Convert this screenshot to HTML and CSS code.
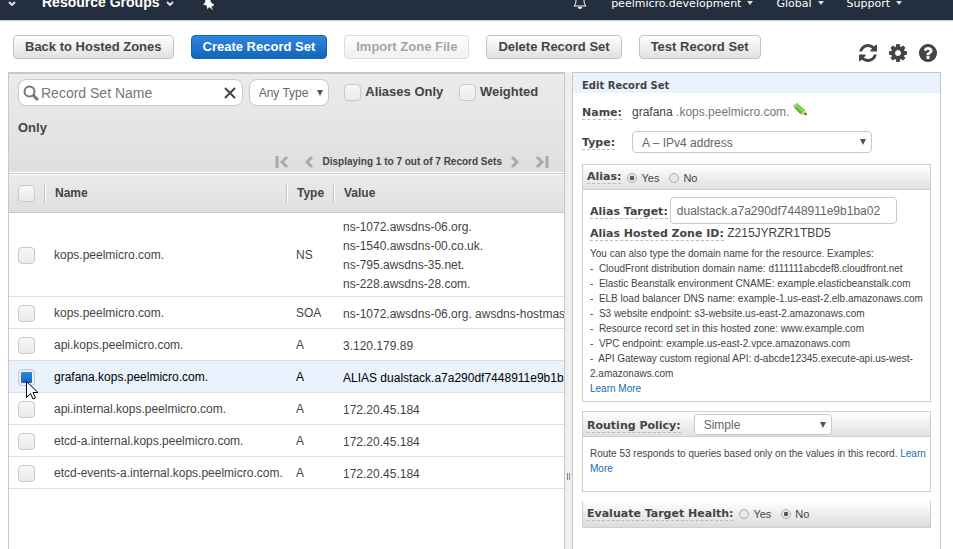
FILE: index.html
```html
<!DOCTYPE html>
<html lang="en">
<head>
<meta charset="utf-8">
<title>Route 53 Record Sets</title>
<link rel="stylesheet" href="styles.css">
</head>
<body>
<header class="topnav">
  <nav class="topnav-bar">
    <svg class="chev chev-first" viewBox="0 0 8 5"><path d="M1 1l3 3 3-3"/></svg>
    <a class="groups" href="#">Resource Groups</a>
    <svg class="chev" viewBox="0 0 8 5"><path d="M1 1l3 3 3-3"/></svg>
    <svg class="pin" viewBox="0 0 12 14"><path d="M3 0L8 1 7.500 6 11 8.500 10 10.500 8 10 10 14 6 11 4.500 13.500 3.500 9.500 0 8.500 2 6.500z"/></svg>
    <svg class="bell" viewBox="0 0 16 18"><path d="M2 14c2-2 2-4 2-7 0-3 2-5 4-5s4 2 4 5c0 3 0 5 2 7z"/><path class="clapper" d="M6 15h4a2 2 0 0 1-4 0z"/></svg>
    <a class="menu account" href="#">peelmicro.development <span class="caret"></span></a>
    <a class="menu region" href="#">Global <span class="caret"></span></a>
    <a class="menu support" href="#">Support <span class="caret"></span></a>
  </nav>
</header>

<div class="toolbar">
  <button class="btn" type="button">Back to Hosted Zones</button>
  <button class="btn primary" type="button">Create Record Set</button>
  <button class="btn" type="button" disabled>Import Zone File</button>
  <button class="btn" type="button">Delete Record Set</button>
  <button class="btn" type="button">Test Record Set</button>
  <div class="tools">
    <button class="tool" type="button" aria-label="Refresh"><svg viewBox="0 0 1536 1536"><path d="M1511 928q0 5-1 7-64 268-268 434.5t-478 166.5q-146 0-282.5-55t-243.5-157l-129 129q-19 19-45 19t-45-19-19-45v-448q0-26 19-45t45-19h448q26 0 45 19t19 45-19 45l-137 137q71 66 161 102t187 36q134 0 250-65t186-179q11-17 53-117 8-23 30-23h192q13 0 22.5 9.5t9.5 22.5zm25-800v448q0 26-19 45t-45 19h-448q-26 0-45-19t-19-45 19-45l138-138q-148-137-349-137-134 0-250 65t-186 179q-11 17-53 117-8 23-30 23h-199q-13 0-22.5-9.5t-9.5-22.5v-7q65-268 270-434.5t480-166.5q146 0 284 55.5t245 156.5l130-129q19-19 45-19t45 19 19 45z"/></svg></button>
    <button class="tool" type="button" aria-label="Settings"><svg viewBox="128 128 1536 1536"><path d="M1152 896q0-106-75-181t-181-75-181 75-75 181 75 181 181 75 181-75 75-181zm512-109v222q0 12-8 23t-20 13l-185 28q-19 54-39 91 35 50 107 138 10 12 10 25t-9 23q-27 37-99 108t-94 71q-12 0-26-9l-138-108q-44 23-91 38-16 136-29 186-7 28-36 28h-222q-14 0-24.5-8.5t-11.5-21.5l-28-184q-49-16-90-37l-141 107q-10 9-25 9-14 0-25-11-126-114-165-168-7-10-7-23 0-12 8-23 15-21 51-66.5t54-70.5q-27-50-41-99l-183-27q-13-2-21-12.5t-8-23.5v-222q0-12 8-23t19-13l186-28q14-46 39-92-40-57-107-138-10-12-10-24 0-10 9-23 26-36 98.5-107.5t94.5-71.5q13 0 26 10l138 107q44-23 91-38 16-136 29-186 7-28 36-28h222q14 0 24.5 8.5t11.5 21.5l28 184q49 16 90 37l142-107q9-9 24-9 13 0 25 10 129 119 165 170 7 8 7 22 0 12-8 23-15 21-51 66.5t-54 70.5q26 50 41 98l183 28q13 2 21 12.5t8 23.5z"/></svg></button>
    <button class="tool" type="button" aria-label="Help"><svg viewBox="128 128 1536 1536"><path d="M1024 1376v-192q0-14-9-23t-23-9h-192q-14 0-23 9t-9 23v192q0 14 9 23t23 9h192q14 0 23-9t9-23zm256-672q0-88-55.5-163t-138.5-116-170-41q-243 0-371 213-15 24 8 42l132 100q7 6 19 6 16 0 25-12 53-68 86-92 34-24 86-24 48 0 85.5 26t37.5 59q0 38-20 61t-68 45q-63 28-115.5 86.5t-52.5 125.5v36q0 14 9 23t23 9h192q14 0 23-9t9-23q0-19 21.5-49.5t54.5-49.5q32-18 49-28.5t46-35 44.5-48 28-60.5 12.5-81zm384 192q0 209-103 385.5t-279.5 279.5-385.5 103-385.5-103-279.5-279.5-103-385.5 103-385.5 279.5-279.5 385.5-103 385.5 103 279.5 279.5 103 385.5z"/></svg></button>
  </div>
</div>

<main class="split">
  <section class="list">
    <div class="filters">
      <div class="filter-line">
        <span class="search">
          <svg class="lens" viewBox="0 0 16 16"><circle cx="6.5" cy="6.5" r="5"/><path d="M10 10l5 5"/></svg>
          <input type="text" aria-label="Record Set Name" placeholder="Record Set Name">
          <button class="clear" type="button" aria-label="Clear"><svg viewBox="0 0 12 12"><path d="M1 1l10 10M11 1L1 11"/></svg></button>
        </span>
        <span class="select any-type"><select aria-label="Record type"><option>Any Type</option></select><svg class="arrow" viewBox="0 0 6 6"><path d="M0 0h6L3 6z"/></svg></span>
        <input class="check" type="checkbox" id="aliases"><label for="aliases">Aliases Only</label>
        <input class="check weighted" type="checkbox" id="weighted"><label for="weighted">Weighted Only</label>
      </div>
      <div class="pager">
        <button type="button" aria-label="First page"><svg class="wide" viewBox="0 0 14 14"><path d="M2 1v12M12 2L7 7l5 5"/></svg></button>
        <button type="button" aria-label="Previous page"><svg viewBox="0 0 10 14"><path d="M8 2L3 7l5 5"/></svg></button>
        <span>Displaying 1 to 7 out of 7 Record Sets</span>
        <button type="button" aria-label="Next page"><svg viewBox="0 0 10 14"><path d="M2 2l5 5-5 5"/></svg></button>
        <button type="button" aria-label="Last page"><svg class="wide" viewBox="0 0 14 14"><path d="M2 2l5 5-5 5M12 1v12"/></svg></button>
      </div>
    </div>
    <table class="records">
      <colgroup><col class="c-check"><col class="c-name"><col class="c-type"><col></colgroup>
      <thead>
        <tr><th><input class="check" type="checkbox" aria-label="Select all"></th><th><span>Name</span></th><th><span>Type</span></th><th><span>Value</span></th></tr>
      </thead>
      <tbody>
        <tr><td><input class="check" type="checkbox" aria-label="Select NS record"></td><td>kops.peelmicro.com.</td><td>NS</td><td>ns-1072.awsdns-06.org.<br>ns-1540.awsdns-00.co.uk.<br>ns-795.awsdns-35.net.<br>ns-228.awsdns-28.com.</td></tr>
        <tr><td><input class="check" type="checkbox" aria-label="Select SOA record"></td><td>kops.peelmicro.com.</td><td>SOA</td><td>ns-1072.awsdns-06.org. awsdns-hostmaster.</td></tr>
        <tr><td><input class="check" type="checkbox" aria-label="Select api"></td><td>api.kops.peelmicro.com.</td><td>A</td><td>3.120.179.89</td></tr>
        <tr class="selected"><td><input class="check" type="checkbox" aria-label="Select grafana" checked><svg class="pointer" viewBox="0 0 12 19"><path d="M.5.5v16l4-4 2.500 5.500 2.500-1-2.500-5.500h5z"/></svg></td><td>grafana.kops.peelmicro.com.</td><td>A</td><td>ALIAS dualstack.a7a290df7448911e9b1ba02</td></tr>
        <tr><td><input class="check" type="checkbox" aria-label="Select api.internal"></td><td>api.internal.kops.peelmicro.com.</td><td>A</td><td>172.20.45.184</td></tr>
        <tr><td><input class="check" type="checkbox" aria-label="Select etcd-a"></td><td>etcd-a.internal.kops.peelmicro.com.</td><td>A</td><td>172.20.45.184</td></tr>
        <tr><td><input class="check" type="checkbox" aria-label="Select etcd-events-a"></td><td>etcd-events-a.internal.kops.peelmicro.com.</td><td>A</td><td>172.20.45.184</td></tr>
      </tbody>
    </table>
  </section>

  <div class="gutter"><span class="grip"></span></div>

  <form class="editor">
    <h2>Edit Record Set</h2>
    <div class="field name-field">
      <span class="cap"><b class="hint">Name:</b></span>
      <span class="record-name">grafana <span>.kops.peelmicro.com.</span></span>
      <svg class="pencil" viewBox="0 0 14 13"><path d="M0 3L4 0l8 7-4 4.500z" fill="#5fd13a"/><path d="M3 2l7 6" stroke="#a5ea85"/><path d="M2 4.500l5.500 6" stroke="#318c1c"/><path d="M0 3L4 0l1.500 1.500L2 4.500z" fill="#d9b0a8"/><path d="M12 7l2 5-6-.5z" fill="#e9bd86"/><path d="M13 9.500l1 2.500-3-.3z" fill="#444"/></svg>
    </div>
    <div class="field type-field">
      <label class="cap" for="rtype"><b class="hint">Type:</b></label>
      <span class="select type-select"><select id="rtype"><option>A – IPv4 address</option></select><svg class="arrow" viewBox="0 0 6 6"><path d="M0 0h6L3 6z"/></svg></span>
    </div>

    <section class="box alias">
      <div class="box-head">
        <b class="hint">Alias:</b>
        <span class="radios">
          <input type="radio" name="alias" id="alias-yes" checked><label for="alias-yes">Yes</label>
          <input type="radio" name="alias" id="alias-no"><label for="alias-no">No</label>
        </span>
      </div>
      <div class="box-body">
        <div class="target"><label for="target"><b class="hint">Alias Target:</b></label><input id="target" type="text" value="dualstack.a7a290df7448911e9b1ba02"></div>
        <div class="zone"><b class="hint">Alias Hosted Zone ID:</b> Z215JYRZR1TBD5</div>
        <div class="note">
          You can also type the domain name for the resource. Examples:<br>
          -&nbsp; CloudFront distribution domain name: d111111abcdef8.cloudfront.net<br>
          -&nbsp; Elastic Beanstalk environment CNAME: example.elasticbeanstalk.com<br>
          -&nbsp; ELB load balancer DNS name: example-1.us-east-2.elb.amazonaws.com<br>
          -&nbsp; S3 website endpoint: s3-website.us-east-2.amazonaws.com<br>
          -&nbsp; Resource record set in this hosted zone: www.example.com<br>
          -&nbsp; VPC endpoint: example.us-east-2.vpce.amazonaws.com<br>
          -&nbsp; API Gateway custom regional API: d-abcde12345.execute-api.us-west-2.amazonaws.com<br>
          <a href="#">Learn More</a>
        </div>
      </div>
    </section>

    <section class="box routing">
      <div class="box-head">
        <label for="policy"><b class="hint">Routing Policy:</b></label>
        <span class="select policy-select"><select id="policy"><option>Simple</option></select><svg class="arrow" viewBox="0 0 6 6"><path d="M0 0h6L3 6z"/></svg></span>
      </div>
      <div class="box-body note">Route 53 responds to queries based only on the values in this record. <a href="#">Learn More</a></div>
    </section>

    <section class="health">
      <b class="hint">Evaluate Target Health:</b>
      <span class="radios">
        <input type="radio" name="health" id="health-yes"><label for="health-yes">Yes</label>
        <input type="radio" name="health" id="health-no" checked><label for="health-no">No</label>
      </span>
    </section>
  </form>
</main>
</body>
</html>
```

FILE: styles.css
```css
* { box-sizing: border-box; }

body {
  margin: 0;
  height: 100vh;
  display: flex;
  flex-direction: column;
  overflow: hidden;
  background: #fff;
  color: #444;
  font: 12px "Liberation Sans", Arial, sans-serif;
}

input, select, button { font-family: inherit; color: inherit; margin: 0; }
a { color: #146eb4; text-decoration: none; }

/* Top navigation */
.topnav {
  flex: none;
  height: 21px;
  background: #232f3e;
  border-bottom: 1px solid #c8c8c8;
  display: flex;
  align-items: flex-end;
  overflow: hidden;
}
.topnav-bar {
  flex: 1;
  height: 34px;
  padding: 0 51px 0 8px;
  display: flex;
  align-items: center;
}
.chev { width: 8px; height: 5px; fill: none; stroke: #ddd; stroke-width: 2; }
.groups { margin: 0 7px 0 26px; padding-bottom: 2px; color: #fff; font-weight: bold; font-size: 14px; }
.pin { width: 12px; height: 14px; margin-left: 29px; fill: #fff; }
.bell { width: 16px; height: 18px; margin-left: auto; margin-bottom: 4px; fill: none; stroke: #fff; }
.bell .clapper { fill: #fff; stroke: none; }
.menu {
  display: flex;
  align-items: center;
  gap: 6px;
  color: #fff;
  font: 11px "DejaVu Sans", Verdana, sans-serif;
}
.account { margin-left: 23px; }
.region, .support { margin-left: 23px; }
.caret { border: 3px solid transparent; border-top: 4px solid #ddd; border-bottom: 0; }

/* Action toolbar */
.toolbar {
  flex: none;
  height: 51px;
  padding: 0 16px 0 13px;
  display: flex;
  align-items: center;
  gap: 17px;
}
.btn {
  height: 24px;
  padding: 0 11px;
  border: 1px solid #c4c4c4;
  border-radius: 4px;
  background: linear-gradient(#fff, #e0e0e0);
  font-size: 13px;
  font-weight: bold;
}
.btn.primary { color: #fff; border-color: #1166bb; background: linear-gradient(#2f86dd, #1166bb); }
.btn:disabled { color: #a5a5a5; border-color: #ddd; background: linear-gradient(#fff, #f0f0f0); }
.tools { display: flex; gap: 12px; margin-left: auto; padding-top: 12px; }
.tool { width: 18px; height: 18px; padding: 0; border: 0; background: none; }
.tool svg { display: block; width: 18px; height: 18px; fill: #444; }

/* Split view */
.split {
  flex: 1;
  min-height: 0;
  margin: 0 12px 0 8px;
  display: grid;
  grid-template-columns: 557fr 7px 369fr;
}
.list {
  min-width: 0;
  overflow: hidden;
  border: 1px solid #c8c8c8;
  border-top-width: 2px;
  border-bottom: 0;
}
.gutter { background: #eee; display: flex; justify-content: center; align-items: flex-end; padding-bottom: 69px; }
.grip { width: 3px; height: 7px; border: solid #888; border-width: 0 1px; }

.filters {
  padding: 0 9px;
  background: linear-gradient(#ebebeb, #dfdfdf);
  border-bottom: 1px solid #fff;
  font-size: 13px;
  font-weight: bold;
}
.filter-line { line-height: 36px; }
.search {
  display: inline-flex;
  align-items: center;
  vertical-align: middle;
  width: 225px;
  height: 27px;
  padding: 0 6px 0 4px;
  gap: 2px;
  background: #fff;
  border: 1px solid #c8c8c8;
  border-radius: 8px;
}
.search input { flex: 1; min-width: 0; padding: 0; border: 0; outline: 0; background: none; font-size: 14px; }
.search input::placeholder { color: #777; opacity: 1; }
.lens { width: 16px; height: 16px; fill: none; stroke: #777; stroke-width: 2; }
.lens path { stroke-width: 3; }
.clear { width: 12px; height: 12px; padding: 0; border: 0; background: none; }
.clear svg { display: block; width: 12px; height: 12px; stroke: #444; stroke-width: 2; }

.select { position: relative; display: inline-block; vertical-align: middle; line-height: 16px; font-weight: normal; }
.select select {
  display: block;
  appearance: none;
  width: 100%;
  height: 100%;
  padding: 1px 9px 0;
  border: 1px solid #c8c8c8;
  border-radius: 4px;
  background: #fff;
  color: #666;
  font-size: 12px;
}
.arrow { position: absolute; right: 6px; top: calc(50% - 3px); width: 6px; height: 6px; fill: #555; pointer-events: none; }
.any-type { width: 80px; height: 27px; margin-left: 2px; }
.any-type select { border-radius: 8px; }

.check {
  appearance: none;
  width: 17px;
  height: 17px;
  border: 1px solid #c8c8c8;
  border-radius: 4px;
  background: linear-gradient(#f7f7f7, #ebebeb);
  vertical-align: middle;
}
.filter-line .check { margin: 0 4px 0 12px; }
.check:checked { border-color: #c8c8c8; background: linear-gradient(#2f86dd, #1166bb) content-box, #eee; padding: 2px; }

.pager { height: 26px; display: flex; justify-content: flex-end; align-items: center; padding: 6px 6px 0 0; font-size: 10px; line-height: 16px; }
.pager button { padding: 0; border: 0; background: none; margin-left: 15px; }
.pager span { margin-left: 9px; }
.pager span + button { margin-left: 8px; }
.pager svg { display: block; width: 10px; height: 14px; fill: none; stroke: #aaa; stroke-width: 3; }
.pager svg.wide { width: 14px; }

/* Record table */
.records { width: 100%; table-layout: fixed; border-collapse: separate; border-spacing: 0; border-top: 1px solid #c8c8c8; }
.c-check { width: 36px; }
.c-name { width: 242px; }
.c-type { width: 47px; }
.records th { height: 39px; padding: 0; text-align: left; background: linear-gradient(#ebebeb, #dfdfdf); border-top: 1px solid #fff; border-bottom: 1px solid #c8c8c8; }
.records th .check { margin-left: 9px; }
.records th span { display: block; padding-left: 9px; border-left: 1px solid #fff; box-shadow: -1px 0 #c0c0c0; line-height: 17px; }
.records td { height: 32px; padding: 5px 0 3px 9px; border-bottom: 1px solid #ddd; line-height: 19px; white-space: nowrap; overflow: hidden; position: relative; }
.records td:last-child { padding-bottom: 2px; }
.records .selected td { background: #eaf2fe; color: #000; overflow: visible; }
.pointer { position: absolute; left: 17px; top: 20px; z-index: 1; width: 12px; height: 19px; fill: #fff; stroke: #000; }

/* Record editor */
.editor { min-width: 0; border: 1px solid #c8c8c8; border-bottom: 0; padding-bottom: 12px; }
.editor h2 { margin: 0; height: 20px; padding: 5px 9px 0; background: #eaf2fe; font: bold 10px/15px "DejaVu Sans", Verdana, sans-serif; }
.hint { border-bottom: 1px dashed #bbb; font: bold 11px/12px "DejaVu Sans", Verdana, sans-serif; }
.field { display: flex; align-items: center; padding: 0 9px; height: 30px; }
.name-field { margin-top: 4px; }
.cap { width: 50px; }
.record-name span { color: #777; }
.pencil { width: 14px; height: 13px; margin: 0 0 5px 4px; fill: none; }
.type-select { width: 240px; height: 22px; }

.box { margin: 7px 9px 9px; border: 1px solid #d0d0d0; }
.box-head { height: 25px; padding: 1px 4px 0; display: flex; align-items: center; border-bottom: 1px solid #d0d0d0; background: linear-gradient(#fff, #e0e0e0); }
.radios { display: flex; align-items: center; font-size: 11px; margin-left: 6px; }
.radios input {
  appearance: none;
  width: 10px;
  height: 10px;
  margin-right: 4px;
  border: 1px solid #aaa;
  border-radius: 50%;
  background: #e8e8e8;
}
.radios input:checked { background: radial-gradient(circle, #555 34%, #e8e8e8 46%); }
.radios label + input { margin-left: 10px; }

.box-body { padding: 7px 7px 5px; }
.target { display: flex; align-items: center; gap: 2px; }
.target input { width: 227px; height: 27px; padding: 0 6px; border: 1px solid #c8c8c8; border-radius: 4px; color: #666; font-size: 12px; }
.zone { line-height: 18px; }
.note { font-size: 10px; line-height: 15px; }
.zone + .note { padding-top: 4px; }
.routing { margin-top: 9px; }
.routing .box-body { padding: 9px 1px 15px 7px; }
.policy-select { width: 138px; height: 21px; margin-left: 13px; }
.health { margin: 0 9px; height: 27px; padding: 0 4px; display: flex; align-items: center; border: 1px solid #d0d0d0; border-top: 0; background: linear-gradient(#fff, #dcdcdc); }
```
